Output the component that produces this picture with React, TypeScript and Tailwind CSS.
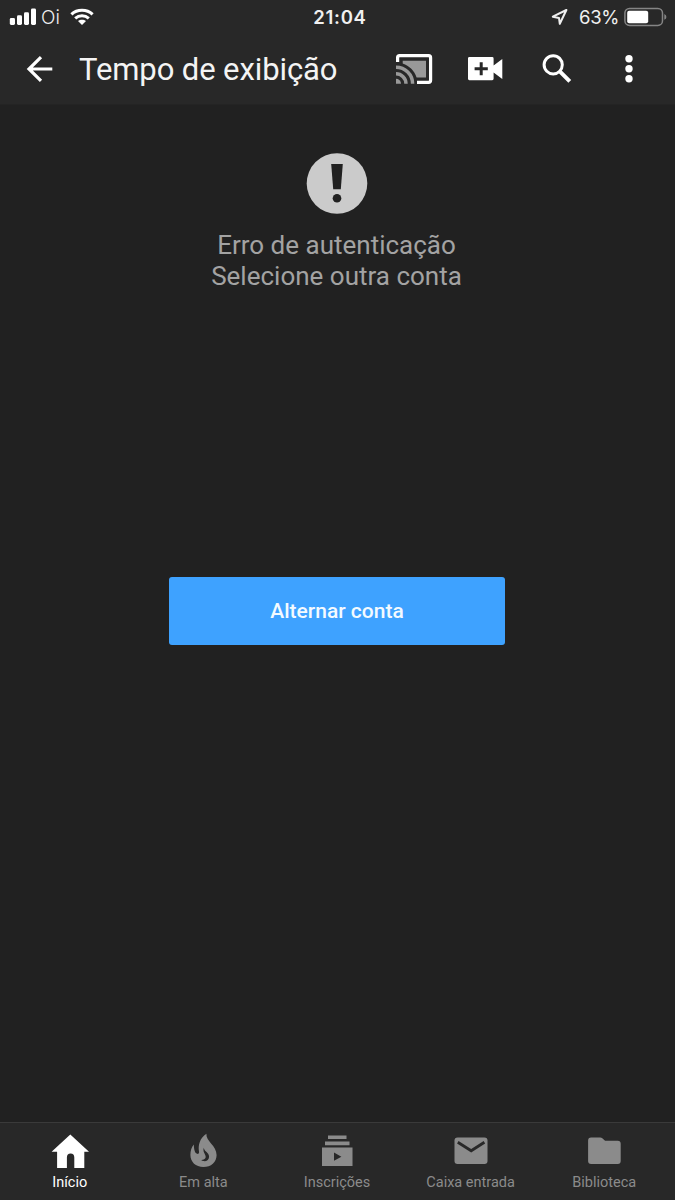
import clsx from "clsx";
import type { ReactNode } from "react";

type NavItemProps = {
  label: string;
  active?: boolean;
  children: ReactNode;
};

const StatusBar = () => {
  return (
    <div className="grid h-[34px] grid-cols-3 items-center font-['Inter',sans-serif] text-[#f0f0f0]">
      <div className="flex items-center pl-[9px]">
        <svg width="28" height="18" viewBox="0 0 28 18" fill="#fff">
          <rect x="0.8" y="10" width="5.2" height="7" rx="1.4" />
          <rect x="8" y="7.3" width="5" height="9.7" rx="1.4" />
          <rect x="15" y="4.2" width="5" height="12.8" rx="1.4" />
          <rect x="22" y="0.5" width="5" height="16.5" rx="1.4" />
        </svg>
        <span className="ml-[4px] w-[19px] text-[19px] leading-none font-light">
          Oi
        </span>
        <svg
          className="ml-[9px]"
          width="26"
          height="18"
          viewBox="0 0 26 18"
          fill="none"
          stroke="#fff"
          strokeWidth="3.1"
        >
          <path d="M2.4 6.3C8.2.9 17.8.9 23.6 6.3" />
          <path d="M6.2 10.3c3.9-3.4 9.7-3.4 13.6 0" />
          <path
            d="M9 13.1c2.3-1.9 5.7-1.9 8 0l-4 4z"
            fill="#fff"
            stroke="none"
          />
        </svg>
      </div>
      <span className="pl-[5px] text-center text-[18.5px] leading-none font-semibold tracking-[0.7px]">
        21:04
      </span>
      <div className="flex items-center justify-end pr-[8px]">
        <svg
          className="mr-[10px]"
          width="18"
          height="18"
          viewBox="0 0 18 18"
          fill="none"
          stroke="#eee"
          strokeWidth="2"
          strokeLinejoin="round"
        >
          <path d="M15.4 2 1.8 8.7l6.2 1.2.8 5.9z" />
        </svg>
        <span className="mr-[5px] w-[40px] text-[18.5px] leading-none tracking-[-0.3px] whitespace-nowrap">
          63%
        </span>
        <svg width="43" height="20" viewBox="0 0 43 20">
          <rect
            x="0.9"
            y="1.4"
            width="37.6"
            height="17"
            rx="4.6"
            fill="none"
            stroke="#858585"
            strokeWidth="1.5"
          />
          <rect x="3.2" y="3.7" width="21" height="12.6" rx="2" fill="#fff" />
          <path d="M40.3 7q2.1.9 2.1 2.9t-2.1 2.9z" fill="#858585" />
        </svg>
      </div>
    </div>
  );
};

const AppBar = () => {
  return (
    <div className="flex h-[70px] items-center text-white">
      <svg
        className="ml-[26px] shrink-0"
        width="27"
        height="28"
        viewBox="0 0 27 28"
        fill="none"
        stroke="currentColor"
        strokeWidth="3.2"
      >
        <path d="M26.3 14H3M15 2.2 3 14l12 11.8" />
      </svg>
      <h1 className="ml-[26px] w-[316px] font-['Roboto',sans-serif] text-[31px] leading-none tracking-[-0.1px] whitespace-nowrap text-[#f4f4f4]">
        Tempo de exibição
      </h1>
      <svg
        className="shrink-0"
        width="38"
        height="32"
        viewBox="0 0 38 32"
        fill="none"
      >
        <path
          d="M7.7 7.7H31v16.7h-9.4C19.5 17.8 14.3 12.600 7.700 10.400z"
          fill="#999"
        />
        <path
          d="M2.600 9V4.700q0-2 2-2h29q2 0 2 2v22.600q0 2-2 2H22"
          stroke="#fff"
          strokeWidth="3.200"
        />
        <path d="M1 25.800A5 5 0 0 1 6 30.800H1z" fill="#999" />
        <path
          d="M1 20.800A10 10 0 0 1 11 30.800M1 14.200A16.600 16.600 0 0 1 17.600 30.800"
          stroke="#999"
          strokeWidth="3.500"
        />
      </svg>
      <svg
        className="ml-[34px] shrink-0"
        width="36"
        height="26"
        viewBox="0 0 36 26"
      >
        <path
          d="M2.4 1h22.8q1.4 0 1.4 1.4v7.2L35.3 3v20l-8.7-6.6v6.4q0 1.4-1.4 1.4H2.4Q1 24.2 1 22.8V2.4Q1 1 2.4 1z"
          fill="#fff"
        />
        <path d="M7.6 12.7h13.2M14.2 6.2v13" stroke="#282828" strokeWidth="3" />
      </svg>
      <svg
        className="ml-[39px] shrink-0"
        width="30"
        height="30"
        viewBox="0 0 30 30"
        fill="none"
        stroke="#fff"
      >
        <circle cx="11.2" cy="10.8" r="9.1" strokeWidth="3" />
        <path d="m17.8 17.3 10 10" strokeWidth="4" />
      </svg>
      <svg
        className="ml-[52px] shrink-0"
        width="10"
        height="30"
        viewBox="0 0 10 30"
        fill="#fff"
      >
        <circle cx="5" cy="4.8" r="3.7" />
        <circle cx="5" cy="14.8" r="3.7" />
        <circle cx="5" cy="24.8" r="3.7" />
      </svg>
    </div>
  );
};

const NavItem = ({ label, active, children }: NavItemProps) => {
  return (
    <button
      className={clsx(
        "flex cursor-pointer flex-col items-center pt-[9px]",
        active ? "text-white" : "text-[#8b8b8b]",
      )}
    >
      <svg width="40" height="38" viewBox="0 0 40 38" fill="currentColor">
        {children}
      </svg>
      <span className="mt-[4px] text-[14.5px] leading-[18px] whitespace-nowrap">
        {label}
      </span>
    </button>
  );
};

const App = () => {
  return (
    <div className="flex h-[1200px] w-[675px] flex-col bg-[#212121] font-['Roboto',sans-serif]">
      <header className="h-[105px] border-b border-[#242424] bg-[#282828]">
        <StatusBar />
        <AppBar />
      </header>

      <main className="flex flex-1 flex-col items-center pt-[48px] pr-px">
        <svg width="62" height="62" viewBox="0 0 62 62">
          <circle cx="31" cy="30.5" r="30.3" fill="#cbcbcb" />
          <path d="M25.2 11h11.6l-2 25.3h-7.6z" fill="#212121" />
          <circle cx="31" cy="45.2" r="4.3" fill="#212121" />
        </svg>
        <p className="mt-[15px] mr-px h-[61px] text-center text-[26px] leading-[30.5px] text-[#a3a3a3]">
          Erro de autenticação
          <br />
          Selecione outra conta
        </p>
        <button className="mt-[286px] h-[68px] w-[336px] cursor-pointer rounded-[3px] bg-[#3ea2ff] pt-px text-[21px] font-medium text-[#f4faff]">
          Alternar conta
        </button>
      </main>

      <nav className="grid h-[78px] grid-cols-5 border-t border-[#3a3a3a] bg-[#282828] pr-[4px] pl-[3px]">
        <NavItem label="Início" active>
          <path d="M20.300 2.500 39 19.800h-4.700V36H24.300V25.500q0-4-3.700-4T16.900 25.500V36H7.100V19.800H1.600z" />
        </NavItem>
        <NavItem label="Em alta">
          <path d="M23.400 1.800C22.800 9.500 33.600 13.500 33.600 23 33.600 30.300 28 35 20.400 35 12.800 35 7.400 30 7.400 23c0-4 1-7.600 3.400-10.500.2 4.500.8 8.500 3.300 9.300 1.300.4 2.200-.6 1.900-2.300C14.900 13.200 16.800 6.200 23.400 1.800z" />
          <path
            d="M20.800 15.800c.4 3.800 5.300 4.700 5.300 8.900 0 2.900-2.600 4.900-5.600 4.400-1-.2-1.800-.6-2.300-1.200 3.500.2 5.400-2 4-4.900-1-2.100-2.500-4.200-1.400-7.200z"
            fill="#282828"
          />
        </NavItem>
        <NavItem label="Inscrições">
          <path d="M11 3.500h18.500V7H11zM8 9.500h24.500v3.700H8z" />
          <path
            fillRule="evenodd"
            d="M5 15.500h30.500V34H5zM17 20.500v8.300l7.400-4.100z"
          />
        </NavItem>
        <NavItem label="Caixa entrada">
          <path d="M6.500 5.500h27q3 0 3 3v20.600q0 3-3 3h-27q-3 0-3-3V8.500q0-3 3-3z" />
          <path
            d="m6.800 10.300 13.400 8.500 13.200-8.500"
            fill="none"
            stroke="#282828"
            strokeWidth="2.8"
          />
        </NavItem>
        <NavItem label="Biblioteca">
          <path d="M7.100 5.500h9.200q1.200 0 2 .8l2.800 2.500h12.600q3 0 3 3v17.300q0 3-3 3H7.100q-3 0-3-3V8.500q0-3 3-3z" />
        </NavItem>
      </nav>
    </div>
  );
};

export default App;
